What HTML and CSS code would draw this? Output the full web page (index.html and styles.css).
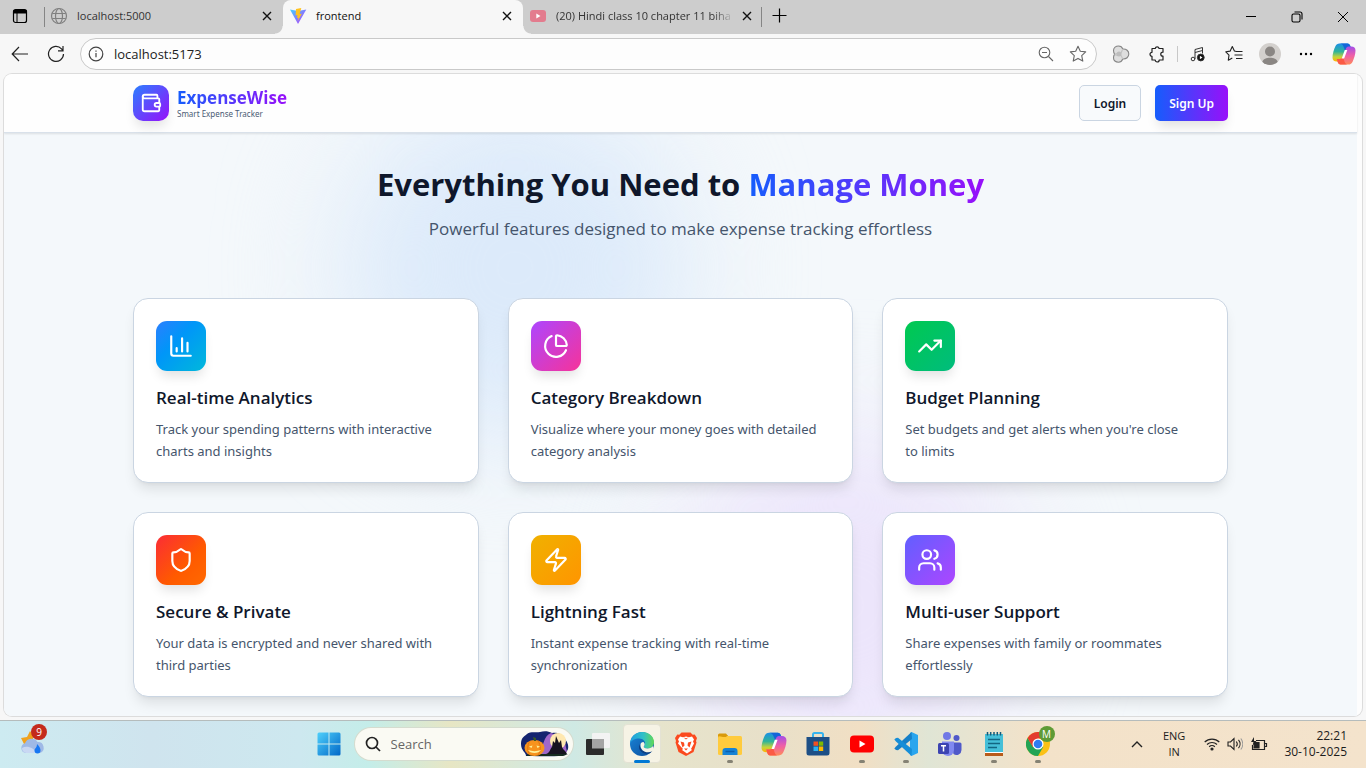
FILE: index.html
```html
<!DOCTYPE html>
<html lang="en">
<head>
<meta charset="utf-8">
<title>frontend</title>
<link rel="stylesheet" href="styles.css">
</head>
<body class="desktop">
<svg class="defs" width="0" height="0" aria-hidden="true">
  <defs>
    <linearGradient id="cpA" x1="0" y1="0" x2="0" y2="1"><stop offset="0" stop-color="#1b8fe8"/><stop offset=".45" stop-color="#2fb39a"/><stop offset=".75" stop-color="#c6d43a"/><stop offset="1" stop-color="#ffb000"/></linearGradient>
    <linearGradient id="cpB" x1="0" y1="0" x2="0" y2="1"><stop offset="0" stop-color="#a24de8"/><stop offset=".5" stop-color="#ee5fa8"/><stop offset="1" stop-color="#ff8a5a"/></linearGradient>
    <linearGradient id="viteA" x1="0" y1="0" x2="1" y2="1"><stop offset="0" stop-color="#41d1ff"/><stop offset="1" stop-color="#bd34fe"/></linearGradient>
    <linearGradient id="winA" x1="0" y1="0" x2="1" y2="1"><stop offset="0" stop-color="#4fd0fb"/><stop offset="1" stop-color="#0067c8"/></linearGradient>
    <linearGradient id="edgeA" x1="0" y1="0" x2="1" y2="0"><stop offset="0" stop-color="#1f9de0"/><stop offset=".55" stop-color="#2fc0c8"/><stop offset="1" stop-color="#62d957"/></linearGradient>
    <linearGradient id="edgeB" x1="0" y1="0" x2="1" y2="1"><stop offset="0" stop-color="#1a86d9"/><stop offset="1" stop-color="#0b4b9a"/></linearGradient>
    <symbol id="copilot" viewBox="0 0 24 24">
      <path d="M7.500 1.500h8c1.500 0 2.300 1 2.800 2.500l.9 3h-3c-1.800 0-2.600.8-3.100 2.400L10 17.500c-.6 1.600-1.500 2-3 2H4.800C2 19.500.5 18 .5 15.500c0-3.500 1.400-8 2.900-11.200.9-1.900 2.100-2.800 4.100-2.800z" fill="url(#cpA)"/>
      <path d="M7.500 1.500h8c1.500 0 2.300 1 2.800 2.500l.9 3h-3c-1.500 0-2.400.6-3 2L11.500 4.500c-.5-1.800-2-3-4-3z" fill="#1565d8"/>
      <path d="M16.500 22.500h-8c-1.500 0-2.300-1-2.800-2.500l-.9-3h3c1.800 0 2.600-.8 3.100-2.400L14 6.500c.6-1.600 1.500-2 3-2h2.200c2.800 0 4.300 1.500 4.300 4 0 3.500-1.400 8-2.900 11.200-.9 1.900-2.100 2.800-4.100 2.800z" fill="url(#cpB)"/>
      <path d="M4.800 17h3c1.800 0 2.600-.8 3.100-2.400l1.600 5c.5 1.600 1.500 2.900 3 2.900h-7c-1.500 0-2.300-1-2.800-2.500z" fill="#fb5a45"/>
      <path d="M12.800 8h2.500l-3.200 8.500H9.700z" fill="#fff"/>
    </symbol>
    <symbol id="close" viewBox="0 0 10 10"><path d="M1 1l8 8M9 1L1 9" stroke="currentColor" stroke-width="1.400" fill="none"/></symbol>
  </defs>
</svg>

<header class="tabstrip">
  <button class="tab-actions" aria-label="Tab actions">
    <svg width="16" height="16" viewBox="0 0 16 16"><rect x="1.500" y="1.500" width="13" height="13" rx="2" fill="none" stroke="#000" stroke-width="1.200"/><path d="M1.500 2h13v3.500h-13z"/><path d="M5 5v9" stroke="#000"/></svg>
  </button>
  <div class="tabs" role="tablist">
    <div class="tab tab-first" role="tab">
      <svg class="favicon" width="18" height="18" viewBox="0 0 18 18" fill="none" stroke="#808080" stroke-width="1.200"><circle cx="9" cy="9" r="7.500"/><ellipse cx="9" cy="9" rx="3.500" ry="7.500"/><path d="M2.300 6.500h13.400M2.300 11.500h13.400"/></svg>
      <span class="tab-title">localhost:5000</span>
      <button class="tab-close" aria-label="Close tab"><svg width="10" height="10"><use href="#close"/></svg></button>
    </div>
    <div class="tab tab-active" role="tab" aria-selected="true">
      <svg class="favicon" width="18" height="18" viewBox="0 0 18 18"><path d="M1 2.500L9 17l8.300-14.500L9 4z" fill="url(#viteA)"/><path d="M12.300 1L7 2l-.4 6.500 1.900-.4-.5 3 1.500-.4-.8 3.600 4.100-7.500-2.200.3z" fill="#ffc21f"/></svg>
      <span class="tab-title">frontend</span>
      <button class="tab-close" aria-label="Close tab"><svg width="10" height="10"><use href="#close"/></svg></button>
    </div>
    <div class="tab" role="tab">
      <svg class="favicon" width="18" height="18" viewBox="0 0 18 18"><rect x="1" y="3" width="16" height="12" rx="3" fill="#e37c8e"/><path d="M7.300 6.500v5l4.200-2.500z" fill="#fff"/></svg>
      <span class="tab-title tab-title-fade">(20) Hindi class 10 chapter 11 biha</span>
      <button class="tab-close" aria-label="Close tab"><svg width="10" height="10"><use href="#close"/></svg></button>
    </div>
  </div>
  <button class="new-tab" aria-label="New tab"><svg width="15" height="15" viewBox="0 0 15 15"><path d="M7.500 .5v14M.5 7.500h14" stroke="#000" stroke-width="1.200"/></svg></button>
  <div class="window-controls">
    <button aria-label="Minimize"><svg width="12" height="12" viewBox="0 0 12 12"><path d="M1 5.500h10" stroke="#000"/></svg></button>
    <button aria-label="Restore"><svg width="12" height="12" viewBox="0 0 12 12" fill="none" stroke="#000" stroke-width="1.100"><rect x="1" y="3" width="8" height="8" rx="1.500"/><path d="M3.500 1H9a2 2 0 0 1 2 2v5.500"/></svg></button>
    <button aria-label="Close"><svg width="12" height="12" viewBox="0 0 12 12"><path d="M1 1l10 10M11 1L1 11" stroke="#000"/></svg></button>
  </div>
</header>

<nav class="toolbar" aria-label="Browser">
  <button class="tool" aria-label="Back"><svg width="18" height="16" viewBox="0 0 18 16" fill="none" stroke="#222" stroke-width="1.200"><path d="M17 8H1.500M8 1L1.200 8 8 15"/></svg></button>
  <button class="tool" aria-label="Refresh"><svg width="18" height="18" viewBox="0 0 18 18" fill="none" stroke="#222" stroke-width="1.200"><path d="M16.500 9A7.500 7.500 0 1 1 14.500 3.800L16 5.500M16 1v4.800h-5"/></svg></button>
  <div class="address">
    <svg width="16" height="16" viewBox="0 0 16 16" fill="none" stroke="#444" stroke-width="1.200"><circle cx="8" cy="8" r="6.800"/><path d="M8 7v4.300M8 4.500v1.200"/></svg>
    <input class="address-input" type="text" value="localhost:5173" aria-label="Address">
    <button class="address-btn" aria-label="Zoom"><svg width="16" height="16" viewBox="0 0 16 16" fill="none" stroke="#666" stroke-width="1.100"><circle cx="6.500" cy="6.500" r="5.300"/><path d="M10.500 10.500l4.500 4.500M4 6.500h5"/></svg></button>
    <button class="address-btn" aria-label="Favorite"><svg width="18" height="18" viewBox="0 0 18 18" fill="none" stroke="#666" stroke-width="1.100" stroke-linejoin="round"><path d="M9 1.300l2.300 5 5.400.6-4 3.700 1.100 5.500L9 13.400l-4.800 2.700 1.100-5.500-4-3.700 5.400-.6z"/></svg></button>
  </div>
  <button class="tool" aria-label="Extension"><svg width="18" height="18" viewBox="0 0 18 18" fill="#dedede" stroke="#858585" stroke-width="1.100"><path d="M1.500 5.500C1.500 2.500 4 1 6.500 1c2.200 0 3.700 1.200 4.300 3 3.500-.3 6 2 6 5s-2.500 5.300-6 5c-.8 2-2.300 3.200-4.300 3.200-3 0-5-1.700-5-4.500 0-1.500.4-2.500 1.200-3.500-.8-1-1.200-2.200-1.200-3.700z"/><path d="M2.700 9.200C5.500 11.500 9 10 10.800 4M10.800 14C9 9 6 7.500 2.700 9.200" stroke="#c2c2c2"/><circle cx="7" cy="9" r="2.500" stroke="none" fill="#bdbdbd"/></svg></button>
  <button class="tool" aria-label="Extensions"><svg width="18" height="18" viewBox="0 0 18 18" fill="none" stroke="#222" stroke-width="1.200" stroke-linejoin="round"><path d="M4 3.500h3.200a2 2 0 0 1 3.900 0H15v3.700c-3 0-3 3.900 0 3.900V15h-3.800a2 2 0 0 1-4 0H4v-3.700a2 2 0 0 1 0-4z"/></svg></button>
  <span class="tool-divider"></span>
  <button class="tool" aria-label="Media"><svg width="16" height="18" viewBox="0 0 16 18" fill="none" stroke="#333" stroke-width="1"><circle cx="3" cy="14" r="1.800"/><path d="M5 14V4.500L12.500 2.500v6M5 7.500l7.500-2"/><circle cx="10.800" cy="12.500" r="3.400" fill="#111"/><path d="M9.900 10.800v3.400l2.600-1.700z" fill="#fff" stroke="none"/></svg></button>
  <button class="tool" aria-label="Favorites"><svg width="18" height="18" viewBox="0 0 18 18" fill="none" stroke="#222" stroke-width="1.100" stroke-linejoin="round"><path d="M11.500 6.500L9.400 6 7.300 1.500 5.200 6.100.8 6.800 4 10.200l-.7 5 4-2.100M11 6.500h6.500M9.500 10h8M11 13.500h6.500"/></svg></button>
  <button class="tool" aria-label="Profile"><svg width="22" height="22" viewBox="0 0 22 22"><circle cx="11" cy="11" r="11" fill="#d3d0cd"/><circle cx="11" cy="8.500" r="5" fill="#8a8683"/><path d="M3.300 18.800c1.500-5.500 13.900-5.500 15.400 0A11 11 0 0 1 3.300 18.800z" fill="#8a8683"/></svg></button>
  <button class="tool" aria-label="More"><svg width="14" height="4" viewBox="0 0 14 4"><circle cx="2" cy="2" r="1.200"/><circle cx="7" cy="2" r="1.200"/><circle cx="12" cy="2" r="1.200"/></svg></button>
  <button class="tool tool-wide" aria-label="Copilot"><svg width="24" height="24"><use href="#copilot"/></svg></button>
</nav>

<main class="viewport">
  <div class="page">
    <header class="site-header">
      <div class="container site-bar">
        <a class="brand" href="#">
          <span class="brand-mark"><svg class="line" width="22" height="22" viewBox="0 0 24 24"><path d="M19 7V4a1 1 0 0 0-1-1H5a2 2 0 0 0 0 4h15a1 1 0 0 1 1 1v4h-3a2 2 0 0 0 0 4h3a1 1 0 0 0 1-1v-2a1 1 0 0 0-1-1"/><path d="M3 5v14a2 2 0 0 0 2 2h15a1 1 0 0 0 1-1v-4"/></svg></span>
          <span class="brand-text"><span class="brand-name accent">ExpenseWise</span><span class="brand-sub">Smart Expense Tracker</span></span>
        </a>
        <div class="auth"><button class="btn btn-light">Login</button><button class="btn btn-primary">Sign Up</button></div>
      </div>
    </header>
    <section class="features">
      <span class="glow glow-blue"></span><span class="glow glow-purple"></span>
      <div class="container features-inner">
        <h1 class="headline">Everything You Need to <span class="accent">Manage Money</span></h1>
        <p class="lead">Powerful features designed to make expense tracking effortless</p>
        <div class="grid">
          <article class="card"><span class="badge badge-blue"><svg class="line" width="26" height="26" viewBox="0 0 24 24"><path d="M3 3v16a2 2 0 0 0 2 2h16M18 17V9M13 17V5M8 17v-3"/></svg></span><h2>Real-time Analytics</h2><p>Track your spending patterns with interactive charts and insights</p></article>
          <article class="card"><span class="badge badge-pink"><svg class="line" width="26" height="26" viewBox="0 0 24 24"><path d="M21 12c.552 0 1.005-.449.950-.998a10 10 0 0 0-8.953-8.951c-.550-.055-.998.398-.998.950v8a1 1 0 0 0 1 1z"/><path d="M21.210 15.890A10 10 0 1 1 8 2.830"/></svg></span><h2>Category Breakdown</h2><p>Visualize where your money goes with detailed category analysis</p></article>
          <article class="card"><span class="badge badge-green"><svg class="line" width="26" height="26" viewBox="0 0 24 24"><path d="M16 7h6v6"/><path d="m22 7-8.500 8.500-5-5L2 17"/></svg></span><h2>Budget Planning</h2><p>Set budgets and get alerts when you're close to limits</p></article>
          <article class="card"><span class="badge badge-red"><svg class="line" width="26" height="26" viewBox="0 0 24 24"><path d="M20 13c0 5-3.500 7.500-7.660 8.950a1 1 0 0 1-.670-.010C7.500 20.500 4 18 4 13V6a1 1 0 0 1 1-1c2 0 4.500-1.200 6.240-2.720a1.170 1.170 0 0 1 1.520 0C14.510 3.810 17 5 19 5a1 1 0 0 1 1 1z"/></svg></span><h2>Secure &amp; Private</h2><p>Your data is encrypted and never shared with third parties</p></article>
          <article class="card"><span class="badge badge-yellow"><svg class="line" width="26" height="26" viewBox="0 0 24 24"><path d="M4 14a1 1 0 0 1-.780-1.630l9.900-10.200a.5.5 0 0 1 .860.460l-1.920 6.020A1 1 0 0 0 13 10h7a1 1 0 0 1 .780 1.630l-9.900 10.200a.5.5 0 0 1-.860-.460l1.920-6.020A1 1 0 0 0 11 14z"/></svg></span><h2>Lightning Fast</h2><p>Instant expense tracking with real-time synchronization</p></article>
          <article class="card"><span class="badge badge-violet"><svg class="line" width="26" height="26" viewBox="0 0 24 24"><path d="M16 21v-2a4 4 0 0 0-4-4H6a4 4 0 0 0-4 4v2"/><circle cx="9" cy="7" r="4"/><path d="M22 21v-2a4 4 0 0 0-3-3.870M16 3.130a4 4 0 0 1 0 7.750"/></svg></span><h2>Multi-user Support</h2><p>Share expenses with family or roommates effortlessly</p></article>
        </div>
      </div>
    </section>
  </div>
</main>

<footer class="taskbar">
  <div class="task-left">
    <button class="weather" aria-label="Weather">
      <svg width="26" height="26" viewBox="0 0 26 26"><path d="M1 10l6-1 3-6 3 4v9H4z" fill="#f0a21e"/><path d="M6 25a5 5 0 0 1-1-9.800A7 7 0 0 1 17.500 14 5.700 5.700 0 0 1 20 25z" fill="#9fb9e6"/><path d="M2 20c5-3 12 0 15 5H6a5 5 0 0 1-4-5z" fill="#c9d8f3"/><path d="M17 16c3 3 3.500 5 3.500 6.500a3 3 0 0 1-6 0c0-2 2.500-2.500 2.500-6.500z" fill="#1877f2"/></svg>
      <span class="count">9</span>
    </button>
  </div>
  <div class="task-center">
    <button class="task" aria-label="Start"><svg width="24" height="24" viewBox="0 0 24 24" fill="url(#winA)"><path d="M.5 2A1.500 1.500 0 0 1 2 .5h9.500v11H.5zM12.500.5H22A1.500 1.500 0 0 1 23.500 2v9.500h-11zM.5 12.500h11v11H2A1.500 1.500 0 0 1 .5 22zM12.500 12.500h11V22a1.500 1.500 0 0 1-1.500 1.500h-9.500z"/></svg></button>
    <label class="search">
      <svg width="16" height="16" viewBox="0 0 16 16" fill="none" stroke="#222" stroke-width="1.700"><circle cx="7" cy="7" r="5.500"/><path d="M11 11l4 4"/></svg>
      <input type="text" placeholder="Search" aria-label="Search">
      <svg width="50" height="26" viewBox="0 0 50 26"><path d="M1 13C1 6 5 5 7 3c4-3 9-1 13-2s8-1 12 1c6-1 10 1 12 5 3 3 5 7 4 11-1 3-3 3-2 6-8 2-24 1-40 1 0-4-5-5-5-12z" fill="#14246f"/><path d="M18 23C24 16 23 5 31 2l13 5 3 14-10 4z" fill="#a067c9"/><circle cx="38" cy="10" r="8" fill="#ffe8b0"/><path d="M26 23c4-1 4-5 6-7l1-6 2 2 1-7 3 7 2-3 1 7c1 3 4 4 5 7z" fill="#17131f"/><path d="M8 23h40l-5 2H6z" fill="#172c20"/><ellipse cx="14.500" cy="17" rx="10" ry="8" fill="#f7931e"/><path d="M10 10c-3 4-3 10 0 14M18 10c3 4 3 10 0 14" stroke="#e37410" fill="none"/><path d="M14 10l-1-4 3 1v3z" fill="#3a5a22"/><path d="M9 15.500l3.500-1-1 2.500zM20 15.500l-3.500-1 1 2.500zM8 19c4 1.500 9 1.500 13 0-2 4-11 4-13 0z" fill="#fff19a"/></svg>
    </label>
    <button class="task" aria-label="Task view"><svg width="24" height="22" viewBox="0 0 24 22"><rect x="0" y="6" width="18" height="16" rx="1" fill="#2b2b2b"/><rect x="6" y="0" width="18" height="15" rx="1" fill="#f3f3f3"/><rect x="6" y="6" width="12" height="9.500" fill="#a5a5a5"/></svg></button>
    <button class="task task-current" aria-label="Edge"><svg width="24" height="24" viewBox="0 0 24 24"><circle cx="12" cy="12" r="12" fill="url(#edgeB)"/><path d="M0 11.500C.5 5 5.500 0 12 0c7 0 12 4.700 12 10 0 4-3 6.500-6.500 6.500-3 0-4.500-1.300-3.500-2.500 3-4-1-7.500-5-7.500C5 6.500 1.500 8 0 11.500z" fill="url(#edgeA)"/><path d="M10 12c-1 5 4 9 9.500 7.500 1.300-.3 2.500-1 3.500-1.500-1 1.500-2 2.500-3.500 3.500C11 23 7 16 10 12z" fill="#0d3f83"/><path d="M13.500 10c1.700 1.500 1.300 3.200.4 4.200-.8 1.200.8 2.300 3.600 2.300 2.400 0 4.300-.9 5.500-2.500l1 4-2 1.500c-6 2.500-12-1-11.500-7 .2-1.300 1-2.500 3-2.500z" fill="#f6f3e5"/></svg></button>
    <button class="task" aria-label="Brave"><svg width="22" height="24" viewBox="0 0 22 24"><path d="M6.500.5h9l2.200 2.300 2-.2L22 6l-1 3 .5 1.500-3 9.500L11 24l-7.500-4L.5 10.500 1 9 0 6l2.300-3.400 2 .2z" fill="#fb4a1f"/><path d="M5 4.500l3 .7 3-.7 3 .7 3-.7 2 3-1 2 1 2-3 5.500 1 1-5 3.500-5-3.500 1-1L3 11.500l1-2-1-2z" fill="#fff"/><path d="M5.500 9.500l3.500 1 .5 3-2 2zM16.500 9.500l-3.500 1-.5 3 2 2zM9 16.500h4l-2 2zM8.500 5.500l2.500 2 2.500-2-2.500.8z" fill="#fb4a1f"/></svg></button>
    <button class="task task-open" aria-label="File Explorer"><svg width="24" height="22" viewBox="0 0 24 22"><path d="M0 2a1.500 1.500 0 0 1 1.500-1.500H8L10 3v5H0z" fill="#d99a0b"/><rect x="0" y="3" width="24" height="19" rx="1.500" fill="#ffcb3d"/><path d="M0 4h8l2-2" fill="#d99a0b"/><path d="M4.500 22v-4a3 3 0 0 1 3-3h9a3 3 0 0 1 3 3v4z" fill="#1583d6"/><path d="M7.500 18.500h9" stroke="#0a5fae" stroke-width="1.500"/></svg></button>
    <button class="task" aria-label="Copilot"><svg width="26" height="26"><use href="#copilot"/></svg></button>
    <button class="task" aria-label="Store"><svg width="24" height="24" viewBox="0 0 24 24"><path d="M7 6V2.500A1.500 1.500 0 0 1 8.500 1h7A1.500 1.500 0 0 1 17 2.500V6" fill="none" stroke="#36b3ee" stroke-width="2"/><path d="M.5 5h23v16a2.500 2.500 0 0 1-2.500 2.500H3A2.500 2.500 0 0 1 .5 21z" fill="#1d4f86"/><path d="M7.500 9.500H12v4.300H7.500z" fill="#f25022"/><path d="M12.800 9.500h4.400v4.300h-4.400z" fill="#7fba00"/><path d="M7.500 14.600H12V19H7.500z" fill="#2ab1f3"/><path d="M12.800 14.600h4.400V19h-4.400z" fill="#ffb900"/></svg></button>
    <button class="task task-open" aria-label="YouTube"><svg width="24" height="18" viewBox="0 0 24 18"><rect width="24" height="17" y=".5" rx="4" fill="#f00"/><path d="M9.500 5.500v7l6-3.500z" fill="#fff"/></svg></button>
    <button class="task task-open" aria-label="Visual Studio Code"><svg width="24" height="24" viewBox="0 0 24 24"><path d="M17.500 0L24 3v18l-6.500 3-1.500-1V1z" fill="#29a5ee"/><path d="M17.500 0L2 14.500.3 16.500 2 18l2 .3L18 7z" fill="#1680c8"/><path d="M17.500 24L2 9.500.3 7.500 2 6l2-.3L18 17z" fill="#168ed8"/></svg></button>
    <button class="task" aria-label="Teams"><svg width="24" height="24" viewBox="0 0 24 24"><circle cx="9" cy="4" r="4" fill="#7078e6"/><circle cx="18.500" cy="6" r="3" fill="#5059c9"/><path d="M13 10.500h9a1.500 1.500 0 0 1 1.500 1.500v6a5 5 0 0 1-8 4z" fill="#5059c9"/><path d="M4 9.500h12V18a6 6 0 0 1-12 0z" fill="#8088f0"/><rect x="0" y="11" width="11" height="11" rx="1.500" fill="#3c44b1"/><path d="M3 13.800h5M5.500 13.800v5.700" stroke="#fff" stroke-width="1.500"/></svg></button>
    <button class="task task-open" aria-label="Notepad"><svg width="20" height="24" viewBox="0 0 20 24"><path d="M1 2h18v19H1z" fill="#45bfd8"/><path d="M1 21h18v3H1z" fill="#b85b1a"/><path d="M1 20.500h18" stroke="#fff"/><path d="M3.500 0v3.500M6.700 0v3.500M10 0v3.500M13.300 0v3.500M16.500 0v3.500" stroke="#155a78" stroke-width="1.500"/><path d="M4 7.500h12M4 11.500h12M4 15.500h9" stroke="#126682" stroke-width="1.500"/></svg></button>
    <button class="task task-open" aria-label="Chrome"><svg width="24" height="24" viewBox="0 0 24 24"><circle cx="12" cy="12" r="12" fill="#fbc116"/><path d="M1.600 6A12 12 0 0 0 12 24l5.200-9L7 15z" fill="#23a455"/><path d="M12 6.500h10.600L22.400 6A12 12 0 0 0 1.600 6l5.200 9z" fill="#e33b2e"/><circle cx="12" cy="12" r="5.500" fill="#fff"/><circle cx="12" cy="12" r="4.300" fill="#2f7cf0"/></svg><span class="count count-green">M</span></button>
  </div>
  <div class="task-right">
    <button class="tray-chevron" aria-label="Hidden icons"><svg width="12" height="8" viewBox="0 0 12 8"><path d="M1 7l5-5 5 5" fill="none" stroke="#222" stroke-width="1.400"/></svg></button>
    <div class="lang">ENG<br>IN</div>
    <div class="tray-icons">
      <svg width="16" height="14" viewBox="0 0 16 14" fill="none" stroke="#222" stroke-width="1.200"><path d="M.7 5a10.500 10.500 0 0 1 14.600 0M3 7.500a7.200 7.200 0 0 1 10 0M5.200 9.800a4 4 0 0 1 5.600 0"/><circle cx="8" cy="12" r="1" fill="#222"/></svg>
      <svg width="16" height="14" viewBox="0 0 16 14" fill="none" stroke="#222" stroke-width="1.100"><path d="M1 5h2.500L7 1.500v11L3.500 9H1zM9.300 4.500a4 4 0 0 1 0 5M11.500 2.800a6.500 6.500 0 0 1 0 8.400"/><path d="M13.800 1.500a9 9 0 0 1 0 11" stroke="#999"/></svg>
      <svg width="18" height="14" viewBox="0 0 18 14" fill="none" stroke="#222" stroke-width="1.200"><path d="M6 3.500h8.500v9h-12V8M15 6.500h1.500v3H15"/><path d="M4.500 5.500h4.500v5.500h-5z" fill="#222"/><path d="M4 0L1 5h2.500L2.500 9l4-5H4z" fill="#222" stroke="none"/></svg>
    </div>
    <div class="clock"><time>22:21</time><time>30-10-2025</time></div>
  </div>
</footer>
</body>
</html>
```
FILE: styles.css
```css
* { box-sizing: border-box; }
button { border: 0; background: none; padding: 0; font: inherit; color: inherit; }
svg { display: block; flex: none; }
input { border: 0; outline: 0; background: none; padding: 0; font: inherit; color: inherit; min-width: 0; }

.desktop {
  margin: 0;
  height: 100vh;
  display: flex;
  flex-direction: column;
  overflow: hidden;
  background: #f7f7f7;
  font-family: "Open Sans", "Noto Sans", sans-serif;
  color: #0f172b;
}
.defs { position: absolute; }

/* Tab strip */
.tabstrip { display: flex; height: 34px; flex: none; background: #cdcdcd; font-size: 11px; color: #333; }
.tab-actions { width: 43px; display: grid; place-items: center; padding: 0 3px 2px 0; }
.tabs { display: flex; }
.tab { position: relative; width: 240px; display: flex; align-items: center; padding: 0 11px 2px 6px; }
.tab-first::before, .tab:last-child::after {
  content: ""; position: absolute; top: 7px; bottom: 7px; width: 1px; background: #858585;
}
.tab-first::before { left: 1px; }
.tab:last-child::after { right: 1px; }
.tab-title { flex: 1; margin: 0 0 2px 9px; white-space: nowrap; }
.tab-title-fade { -webkit-mask-image: linear-gradient(90deg, #000 88%, transparent); mask-image: linear-gradient(90deg, #000 88%, transparent); }
.tab-first .favicon { margin-left: 1px; }
.tab-close { width: 10px; margin-left: 8px; color: #111; }
.tab-active { background: #f7f7f7; border-radius: 8px 8px 0 0; color: #111; }
.tab-active::before, .tab-active::after { content: ""; position: absolute; bottom: 0; width: 8px; height: 8px; }
.tab-active::before { right: 100%; background: radial-gradient(circle at 0 0, #cdcdcd 7px, #f7f7f7 8px); }
.tab-active::after { left: 100%; background: radial-gradient(circle at 100% 0, #cdcdcd 7px, #f7f7f7 8px); }
.new-tab { width: 33px; display: grid; place-items: center; padding-bottom: 3px; }
.window-controls { margin-left: auto; display: grid; grid-template-columns: repeat(3, 46px); }
.window-controls button { display: grid; place-items: center; }

/* Toolbar */
.toolbar { display: flex; align-items: center; height: 40px; flex: none; padding: 0 2px; }
.tool { width: 36px; height: 36px; display: grid; place-items: center; }
.tool-wide { width: 40px; }
.tool-divider { width: 1px; height: 16px; margin: 0 2px; background: #c8c8c8; }
.address {
  flex: 1; display: flex; align-items: center; height: 32px; margin: 0 6px;
  padding: 0 2px 0 7px; border: 1px solid #c9c9c9; border-radius: 16px; background: #fdfdfd;
}
.address-input { flex: 1; margin-left: 10px; font-size: 13px; color: #222; }
.address-btn { width: 32px; height: 30px; display: grid; place-items: center; }

/* Page viewport */
.viewport {
  flex: 1; min-height: 0; margin: 0 4px 4px; overflow: hidden; padding-right: 5px;
  border-radius: 8px; background: #fdfdfd; box-shadow: 0 0 0 1px #dcdcdc;
}
.page { height: 100%; display: flex; flex-direction: column; }
.container { width: 100%; max-width: 1153px; margin: 0 auto; padding: 0 29px; }
.accent { background: linear-gradient(90deg, #155dfc, #9810fa); -webkit-background-clip: text; background-clip: text; color: transparent; }
.line { fill: none; stroke: #fff; stroke-width: 2; stroke-linecap: round; stroke-linejoin: round; }

.site-header { position: relative; z-index: 1; background: #fefefe; border-bottom: 1px solid #d9e1ea; box-shadow: 0 1px 2px #0000001a; }
.site-bar { display: flex; align-items: center; justify-content: space-between; height: 58px; }
.brand { display: flex; align-items: center; gap: 8px; text-decoration: none; }
.brand-mark {
  width: 36px; height: 36px; display: grid; place-items: center; border-radius: 10px;
  background: linear-gradient(135deg, #2b7fff, #9810fa); box-shadow: 0 8px 12px -3px #0000001f;
}
.brand-text { display: flex; flex-direction: column; }
.brand-name { font-size: 17px; line-height: 22px; font-weight: 700; }
.brand-sub { font-family: "Noto Sans", sans-serif; font-size: 8px; line-height: 10px; color: #4a5b74; }
.auth { display: flex; gap: 14px; }
.btn { height: 36px; padding: 0 14px; border-radius: 5px; font-family: "Noto Sans", sans-serif; font-size: 12px; font-weight: 600; }
.btn-light { border: 1px solid #cad5e2; background: #f8fafc; }
.btn-primary { background: linear-gradient(90deg, #155dfc, #9810fa); color: #fff; box-shadow: 0 8px 12px -3px #0000001f; }

.features { position: relative; flex: 1; min-height: 0; overflow: hidden; background: #f4f8fb; }
.glow { position: absolute; width: 346px; height: 346px; border-radius: 50%; filter: blur(58px); }
.glow-blue { left: 25%; top: -38px; background: #dceafa; }
.glow-purple { right: 25%; bottom: -62px; background: #ece5fb; }
.features-inner { position: relative; padding-top: 29px; }
.headline { margin: 0; font-size: 31px; line-height: 44px; font-weight: 700; text-align: center; }
.lead { margin: 9px 0 55px; font-size: 17px; line-height: 28px; text-align: center; color: #45556c; }
.grid { display: grid; grid-template-columns: repeat(3, 1fr); gap: 29px; }
.card {
  padding: 22px 22px 20px; border: 1px solid #cad5e2; border-radius: 15px; background: #fff;
  box-shadow: 0 9px 13px -3px #0000001a, 0 3px 5px -4px #0000001a;
}
.card h2 { margin: 14px 0 8px; font-size: 17px; line-height: 25px; font-weight: 600; }
.card p { margin: 0; padding-right: 12px; font-family: "Noto Sans", sans-serif; font-size: 13px; line-height: 22px; color: #45556c; }
.badge { display: grid; place-items: center; width: 50px; height: 50px; border-radius: 11px; box-shadow: 0 8px 12px -3px #0000001f; }
.badge-blue { background: linear-gradient(135deg, #2b7fff, #0096f8 40%, #00b8db); }
.badge-pink { background: linear-gradient(135deg, #ad46ff, #f6339a); }
.badge-green { background: linear-gradient(135deg, #00c950, #00bc7d); }
.badge-red { background: linear-gradient(135deg, #fb2c36, #ff5a00 60%, #ff6900); }
.badge-yellow { background: linear-gradient(135deg, #f0b100, #ff9500); }
.badge-violet { background: linear-gradient(135deg, #615fff, #ad46ff); }

/* Taskbar */
.taskbar {
  flex: none; height: 48px; display: grid; grid-template-columns: 1fr auto 1fr; align-items: center;
  padding-bottom: 2px; border-top: 1px solid #b5bcbc;
  background: linear-gradient(90deg, #cdebf1, #cfe4ee 11%, #cde8ef 22%, #c4ede9 27%, #e7e6c4 33%, #d8e8d8 38%, #cfe9e4 42%, #e6e4cc 48%, #e8e0c9 56%, #f1dfc4 63%, #e0e5d5 68%, #f3e2c9 76%, #f4e3cc);
}
.task-left { padding-left: 19px; }
.weather { position: relative; width: 30px; height: 30px; }
.weather svg { margin-left: 1px; }
.count {
  position: absolute; top: -2px; right: 2px; width: 16px; height: 16px; border-radius: 50%;
  background: #c42b1c; color: #fff; font-size: 10px; line-height: 16px; text-align: center;
}
.count-green { top: 5px; right: 5px; background: #5f9b35; }
.task-center { display: flex; align-items: center; }
.task { position: relative; width: 44px; height: 45px; display: grid; place-items: center; }
.task-open::after, .task-current::after { content: ""; position: absolute; bottom: 3px; left: 19px; width: 6px; height: 3px; border-radius: 2px; background: #858274; }
.task-current::before { content: ""; position: absolute; inset: 3px; border-radius: 4px; background: #f6f3e5; border: 1px solid #e4e2d4; }
.task-current svg { position: relative; }
.task-current::after { left: 14px; width: 16px; background: #0078d4; }
.search {
  width: 218px; height: 32px; margin: 0 3px 0 4px; display: flex; align-items: center; padding: 0 3px 0 10px;
  border-radius: 16px; background: #fafaf3; box-shadow: 0 0 0 1px #d5dccf; font-size: 13px; color: #555;
}
.search input { flex: 1; margin-left: 10px; }
.search input::placeholder { color: #666; opacity: 1; }
.task-right { display: flex; align-items: center; justify-content: flex-end; padding-right: 19px; font-size: 12px; line-height: 16px; color: #1c1c1c; }
.tray-chevron { margin-right: 20px; }
.lang { font-size: 11px; text-align: center; }
.tray-icons { display: flex; gap: 7px; margin: 0 16px 0 19px; }
.clock { display: flex; flex-direction: column; text-align: right; }
```
